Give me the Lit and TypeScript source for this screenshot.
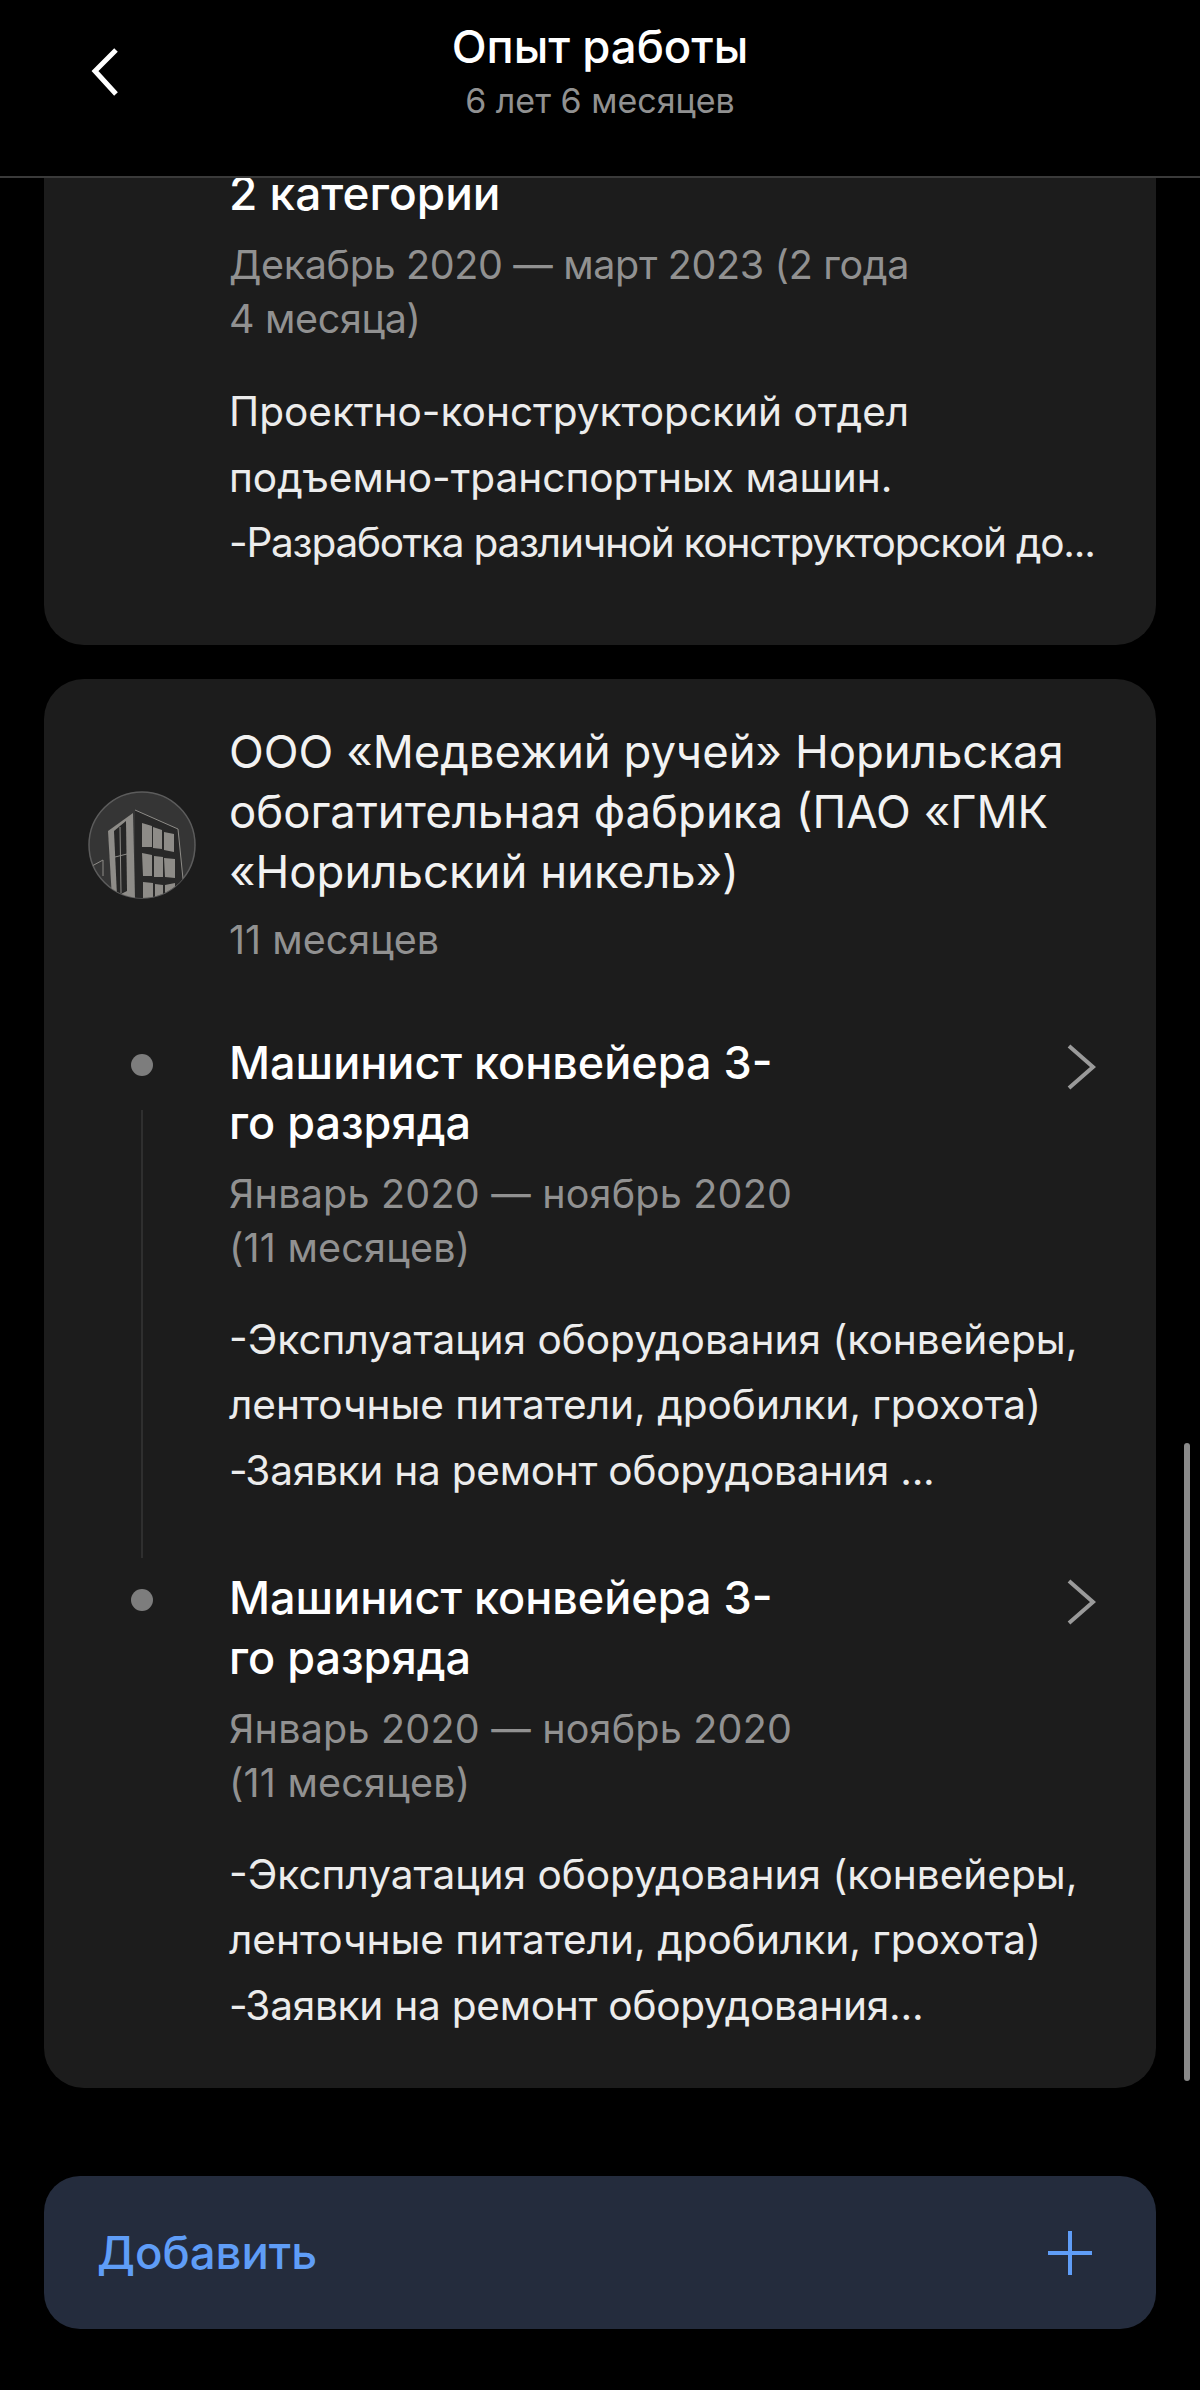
import { LitElement, html, css } from 'lit';
import { customElement } from 'lit/decorators.js';

const roles = [
  { last: '-Заявки на ремонт оборудования ...' },
  { last: '-Заявки на ремонт оборудования...' },
];

@customElement('app-root')
export class AppRoot extends LitElement {
  static styles = css`
    :host {
      display: block;
      position: relative;
      width: 1200px;
      height: 2390px;
      overflow: hidden;
      background: #000;
      color: #fff;
      font-family: Inter, 'Noto Sans', sans-serif;
    }
    .header {
      height: 176px;
      border-bottom: 2px solid #3a3a3a;
      display: flex;
      flex-direction: column;
      align-items: center;
      position: relative;
    }
    .back {
      position: absolute;
      left: 90px;
      top: 48px;
    }
    .title {
      margin-top: 20px;
      font-size: 45.5px;
      line-height: 54px;
      font-weight: 500;
    }
    .subtitle {
      margin-top: 7px;
      font-size: 34px;
      line-height: 40px;
      color: #919191;
    }
    .content {
      padding: 0 44px;
      display: flex;
      flex-direction: column;
    }
    .card {
      background: #1c1c1c;
      border-radius: 40px;
    }
    .first {
      border-radius: 0 0 40px 40px;
      padding: 0 56px 69px 185px;
      margin-bottom: 34px;
    }
    .second {
      padding: 43px 44px 50px 0;
    }
    .name {
      font-size: 45px;
      line-height: 60px;
      font-weight: 500;
      margin: 0;
    }
    .first .name {
      font-size: 46px;
      line-height: 30px;
    }
    .dates {
      margin-top: 14px;
      font-size: 39.5px;
      letter-spacing: 0.2px;
      line-height: 54px;
      color: #919191;
    }
    .first .dates {
      margin-top: 30px;
      letter-spacing: -0.35px;
    }
    .body {
      margin-top: 32px;
      font-size: 40.6px;
      line-height: 65.5px;
      color: #ececec;
      white-space: nowrap;
    }
    .first .body {
      margin-top: 33px;
    }
    .tight {
      letter-spacing: -1.25px;
    }
    .tail {
      letter-spacing: -0.25px;
    }
    .company {
      display: flex;
      align-items: center;
      margin-bottom: 70px;
    }
    .logo {
      width: 185px;
      flex: none;
      display: flex;
      padding: 6px 0 0 44px;
      box-sizing: border-box;
    }
    .company-name {
      font-size: 45.5px;
      line-height: 60px;
      color: #f2f2f2;
    }
    .period {
      margin-top: 15px;
      font-size: 39.5px;
      line-height: 46px;
      color: #919191;
    }
    .role {
      display: flex;
      height: 535px;
    }
    .role:last-child {
      height: auto;
    }
    .rail {
      width: 185px;
      flex: none;
      display: flex;
      flex-direction: column;
      align-items: center;
      padding-left: 11px;
      box-sizing: border-box;
    }
    .dot {
      margin-top: 21px;
      width: 22px;
      height: 22px;
      border-radius: 50%;
      background: #7d7d7d;
      flex: none;
    }
    .line {
      margin-top: 34px;
      width: 2px;
      height: 448px;
      background: #2f2f2f;
    }
    .role-main {
      flex: 1;
      position: relative;
    }
    .chevron {
      position: absolute;
      right: 16px;
      top: 11px;
    }
    .add {
      margin-top: 88px;
      height: 153px;
      border-radius: 36px;
      background: #242c3d;
      color: #5f9df7;
      display: flex;
      align-items: center;
      justify-content: space-between;
      padding: 0 64px 0 53px;
      font-size: 45.5px;
      font-weight: 500;
    }
    .scrollbar {
      position: absolute;
      right: 10px;
      top: 1443px;
      width: 6px;
      height: 638px;
      border-radius: 3px;
      background: #8a8a8a;
    }
  `;

  renderRole(last: string, showLine: boolean) {
    return html`
      <div class="role">
        <div class="rail">
          <div class="dot"></div>
          ${showLine ? html`<div class="line"></div>` : ''}
        </div>
        <div class="role-main">
          <svg class="chevron" width="30" height="46" viewBox="0 0 30 46" fill="none">
            <path d="M3 2 L27 23 L3 44" stroke="#9a9a9a" stroke-width="4" />
          </svg>
          <div class="name">Машинист конвейера 3-<br />го разряда</div>
          <div class="dates">Январь 2020 — ноябрь 2020<br />(11 месяцев)</div>
          <div class="body">
            -Эксплуатация оборудования (конвейеры,<br />
            ленточные питатели, дробилки, грохота)<br />
            <span class="tail">${last}</span>
          </div>
        </div>
      </div>
    `;
  }

  render() {
    return html`
      <div class="header">
        <svg class="back" width="32" height="48" viewBox="0 0 32 48" fill="none">
          <path d="M26 2 L5 23 L26 46" stroke="#fff" stroke-width="5" />
        </svg>
        <div class="title">Опыт работы</div>
        <div class="subtitle">6 лет 6 месяцев</div>
      </div>
      <div class="content">
        <div class="card first">
          <div class="name">2 категории</div>
          <div class="dates">Декабрь 2020 — март 2023 (2 года<br />4 месяца)</div>
          <div class="body">
            Проектно-конструкторский отдел<br />
            подъемно-транспортных машин.<br />
            <span class="tight">-Разработка различной конструкторской до...</span>
          </div>
        </div>
        <div class="card second">
          <div class="company">
            <div class="logo">
              <svg width="108" height="108" viewBox="0 0 108 108">
                <defs><clipPath id="c"><circle cx="54" cy="54" r="53" /></clipPath></defs>
                <circle cx="54" cy="54" r="53" fill="#353535" stroke="#5c5c5c" stroke-width="1.5" />
                <g clip-path="url(#c)">
                  <path d="M47 19 L90 38 L95 88 L88 108 L47 108 Z" fill="#282828" />
                  <path d="M20 40 L45 22 L47 108 L24 108 Z" fill="#8e8c88" />
                  <path d="M26 40 L38 30 L39 100 L29 105 Z" fill="#262626" />
                  <path d="M32 36 L33 102 M27 66 L39 63" stroke="#8e8c88" stroke-width="1" fill="none" />
                  <path d="M54 32 L64 35 L64 56 L54 56 Z M65 36 L74 39 L74 58 L65 57 Z M76 41 L86 43 L86 61 L76 59 Z" fill="#8e8c88" />
                  <path d="M54 62 L64 64 L64 85 L55 85 Z M66 65 L75 66 L75 86 L66 86 Z M76 67 L87 68 L87 87 L77 86 Z" fill="#8e8c88" />
                  <path d="M55 91 L65 92 L65 108 L55 108 Z M67 93 L75 94 L75 108 L67 108 Z M77 94 L87 92 L87 108 L77 108 Z" fill="#8e8c88" />
                  <path d="M47 19 L90 38 L95 88 M4 75 L15 69 L15 85" stroke="#8e8c88" stroke-width="1" fill="none" />
                </g>
              </svg>
            </div>
            <div>
              <div class="company-name">
                ООО «Медвежий ручей» Норильская<br />
                обогатительная фабрика (ПАО «ГМК<br />
                «Норильский никель»)
              </div>
              <div class="period">11 месяцев</div>
            </div>
          </div>
          ${roles.map((r, i) => this.renderRole(r.last, i === 0))}
        </div>
        <div class="add">
          <span>Добавить</span>
          <svg width="44" height="44" viewBox="0 0 44 44">
            <path d="M22 0 V44 M0 22 H44" stroke="#5f9df7" stroke-width="4" />
          </svg>
        </div>
      </div>
      <div class="scrollbar"></div>
    `;
  }
}
